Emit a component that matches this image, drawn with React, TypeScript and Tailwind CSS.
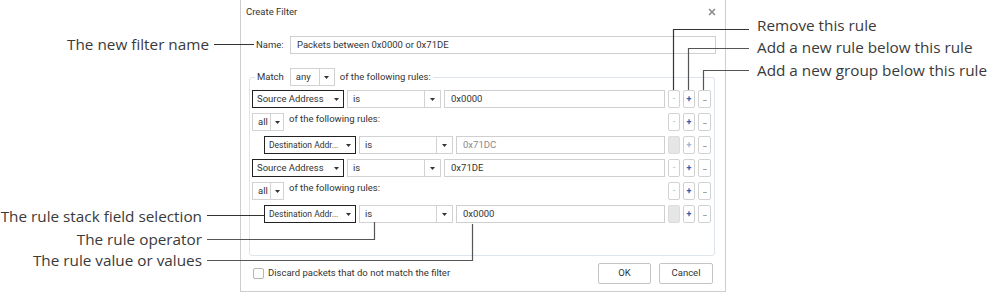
import React from 'react';

type Row =
  | { kind: 'rule'; field: string; nested?: boolean; value: string; muted?: boolean; canRemove: boolean; faintAdd?: boolean }
  | { kind: 'group'; op: string };

const rows: Row[] = [
  { kind: 'rule', field: 'Source Address', value: '0x0000', canRemove: true },
  { kind: 'group', op: 'all' },
  { kind: 'rule', field: 'Destination Addr...', nested: true, value: '0x71DC', muted: true, canRemove: false, faintAdd: true },
  { kind: 'rule', field: 'Source Address', value: '0x71DE', canRemove: true },
  { kind: 'group', op: 'all' },
  { kind: 'rule', field: 'Destination Addr...', nested: true, value: '0x0000', canRemove: false },
];

const Arrow = () => (
  <svg width="5" height="3" viewBox="0 0 5 3" className="shrink-0">
    <path d="M0 0h5L2.5 3z" fill="#333" />
  </svg>
);

// select with a separate arrow cell
const SplitSelect: React.FC<{ label: string; textW: string; arrowW: string }> = ({ label, textW, arrowW }) => (
  <div className="flex h-[18px] border border-[#d2d2d2] bg-white">
    <div className={`${textW} flex items-center pl-[5px] text-[9.5px] text-[#333]`}>{label}</div>
    <div className={`${arrowW} flex items-center justify-center border-l border-[#d2d2d2]`}>
      <Arrow />
    </div>
  </div>
);

const RowButtons: React.FC<{ canRemove: boolean; faintAdd?: boolean }> = ({ canRemove, faintAdd }) => (
  <div className="flex gap-[3px] shrink-0">
    {canRemove ? (
      <button className="w-[12px] h-[18px] border border-[#d2d2d2] rounded-[2px] bg-white text-[8px] leading-none text-[#999]">-</button>
    ) : (
      <button className="w-[12px] h-[18px] border border-[#dcdcdc] rounded-[2px] bg-[#e6e6e6]" />
    )}
    <button
      className={`w-[12px] h-[18px] border border-[#d2d2d2] rounded-[2px] bg-white text-[9px] leading-none font-bold ${
        faintAdd ? 'text-[#9db3d6]' : 'text-[#2d5fae]'
      }`}
    >
      +
    </button>
    <button className="w-[13px] h-[18px] border border-[#d2d2d2] rounded-[2px] bg-white text-[8px] leading-none text-[#333] flex items-end justify-center pb-[4px] tracking-[-1px]">
      ...
    </button>
  </div>
);

const RuleRow: React.FC<{ row: Extract<Row, { kind: 'rule' }> }> = ({ row }) => (
  <div className={`flex items-center ${row.nested ? 'pl-[12px]' : ''}`}>
    <div className="w-[92px] h-[18px] border border-[#222] flex items-center justify-between pl-[4px] pr-[4px] bg-white">
      <span className={`${row.nested ? 'text-[8.5px]' : 'text-[9.5px]'} text-[#333] whitespace-nowrap`}>{row.field}</span>
      <Arrow />
    </div>
    <div className="ml-[3px]">
      <SplitSelect label="is" textW="w-[76px]" arrowW="w-[16px]" />
    </div>
    <div className="ml-[3px] flex-1 h-[18px] border border-[#cfcfcf] flex items-center pl-[6px] mr-[3px]">
      <span className={`text-[9.5px] ${row.muted ? 'text-[#8a8a8a]' : 'text-[#333]'}`}>{row.value}</span>
    </div>
    <RowButtons canRemove={row.canRemove} faintAdd={row.faintAdd} />
  </div>
);

const GroupRow: React.FC<{ op: string }> = ({ op }) => (
  <div className="flex items-start">
    <SplitSelect label={op} textW="w-[17px]" arrowW="w-[13px]" />
    <span className="ml-[5px] text-[9.5px] text-[#333] leading-[12px] flex-1">of the following rules:</span>
    <RowButtons canRemove />
  </div>
);

export default function App() {
  return (
    <div className="relative w-[987px] h-[293px] bg-white overflow-hidden font-['Roboto',sans-serif]">
      {/* Dialog */}
      <div className="ml-[240px] w-[486px] h-[292px] border border-t-0 border-[#cdcdcd] bg-white flex flex-col">
        {/* Header */}
        <div className="h-[22px] pt-[2px] flex items-center justify-between pl-[5px] pr-[9px]">
          <span className="text-[9.5px] text-[#333]">Create Filter</span>
          <svg width="8" height="8" viewBox="0 0 8 8">
            <path d="M1 1l6 6M7 1L1 7" stroke="#8c8c8c" strokeWidth="1.6" />
          </svg>
        </div>

        {/* Name */}
        <div className="mt-[14px] flex items-center pl-[15px] pr-[9px]">
          <label className="w-[34px] text-[9.5px] text-[#333]">Name:</label>
          <div className="flex-1 h-[18px] border border-[#cfcfcf] flex items-center pl-[6px]">
            <span className="text-[9.5px] text-[#333]">Packets between 0x0000 or 0x71DE</span>
          </div>
        </div>

        {/* Rules */}
        <fieldset className="mt-[14px] ml-[8px] w-[466px] h-[188px] border border-[#dde4ec] rounded-[3px] pl-[2px] pr-[3px]">
          <legend className="ml-[3px] px-[2px]">
            <div className="flex items-center">
              <span className="text-[9.5px] text-[#333] mr-[6px]">Match</span>
              <SplitSelect label="any" textW="w-[28px]" arrowW="w-[15px]" />
              <span className="ml-[5px] text-[9.5px] text-[#333]">of the following rules:</span>
            </div>
          </legend>
          <div className="mt-[4px] flex flex-col gap-[5px]">
            {rows.map((r, i) =>
              r.kind === 'rule' ? <RuleRow key={i} row={r} /> : <GroupRow key={i} op={r.op} />
            )}
          </div>
        </fieldset>

        {/* Footer */}
        <div className="mt-[7px] flex items-center pl-[12px] pr-[12px]">
          <div className="w-[11px] h-[11px] border border-[#b5b5b5] rounded-[2px] bg-white" />
          <span className="ml-[4px] text-[9.5px] text-[#333] flex-1">Discard packets that do not match the filter</span>
          <button className="w-[53px] h-[21px] border border-[#c4c4c4] rounded-[2px] bg-white text-[9.5px] text-[#333]">OK</button>
          <button className="ml-[8px] w-[54px] h-[21px] border border-[#c4c4c4] rounded-[2px] bg-white text-[9.5px] text-[#333]">Cancel</button>
        </div>
      </div>

      {/* Callout lines */}
      <svg className="absolute inset-0 pointer-events-none" width="987" height="293">
        <g fill="none" strokeWidth="1.2">
          <path d="M214 44.5H254" stroke="#333" />
          <path d="M207 215.5H264" stroke="#333" />
          <path d="M207 239.5H374.5V222" stroke="#555" />
          <path d="M207 260.5H472.5V224" stroke="#555" />
          <path d="M673.5 90V29.5H749" stroke="#333" />
          <path d="M688.5 90V48.5H749" stroke="#555" />
          <path d="M703.5 90V70.5H749" stroke="#555" />
        </g>
      </svg>

      {/* Callout labels */}
      <div className="absolute inset-0 pointer-events-none font-['Open_Sans',sans-serif] text-[15.3px] leading-[18px] text-[#3a3a3a]">
        <div className="absolute right-[778px] top-[35px] whitespace-nowrap">The new filter name</div>
        <div className="absolute right-[785px] top-[207px] whitespace-nowrap">The rule stack field selection</div>
        <div className="absolute right-[785px] top-[230px] whitespace-nowrap">The rule operator</div>
        <div className="absolute right-[785px] top-[251px] whitespace-nowrap">The rule value or values</div>
        <div className="absolute left-[757px] top-[16px] whitespace-nowrap">Remove this rule</div>
        <div className="absolute left-[757px] top-[38px] whitespace-nowrap">Add a new rule below this rule</div>
        <div className="absolute left-[757px] top-[61px] whitespace-nowrap">Add a new group below this rule</div>
      </div>
    </div>
  );
}
